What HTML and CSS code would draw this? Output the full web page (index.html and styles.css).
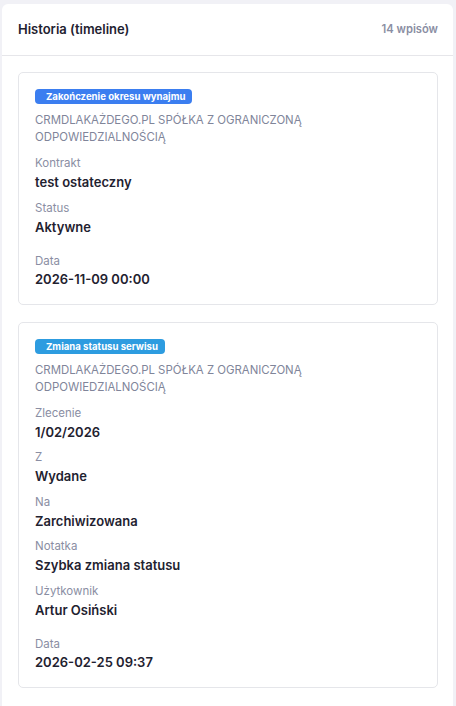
FILE: index.html
```html
<!DOCTYPE html>
<html lang="pl">
<head>
<meta charset="utf-8">
<title>Historia (timeline)</title>
<link rel="stylesheet" href="styles.css">
</head>
<body>
<section class="panel">
  <header class="panel-head">
    <h2 class="panel-title">Historia (timeline)</h2>
    <span class="panel-count">14 wpisów</span>
  </header>
  <div class="panel-body">
    <article class="entry">
      <span class="badge badge-blue">Zakończenie okresu wynajmu</span>
      <p class="company">CRMDLAKAŻDEGO.PL SPÓŁKA Z OGRANICZONĄ ODPOWIEDZIALNOŚCIĄ</p>
      <div class="field"><div class="label">Kontrakt</div><div class="value">test ostateczny</div></div>
      <div class="field"><div class="label">Status</div><div class="value">Aktywne</div></div>
      <div class="field field-date"><div class="label">Data</div><div class="value">2026-11-09 00:00</div></div>
    </article>
    <article class="entry">
      <span class="badge badge-sky">Zmiana statusu serwisu</span>
      <p class="company">CRMDLAKAŻDEGO.PL SPÓŁKA Z OGRANICZONĄ ODPOWIEDZIALNOŚCIĄ</p>
      <div class="field"><div class="label">Zlecenie</div><div class="value">1/02/2026</div></div>
      <div class="field"><div class="label">Z</div><div class="value">Wydane</div></div>
      <div class="field"><div class="label">Na</div><div class="value">Zarchiwizowana</div></div>
      <div class="field"><div class="label">Notatka</div><div class="value">Szybka zmiana statusu</div></div>
      <div class="field"><div class="label">Użytkownik</div><div class="value">Artur Osiński</div></div>
      <div class="field field-date"><div class="label">Data</div><div class="value">2026-02-25 09:37</div></div>
    </article>
  </div>
</section>
</body>
</html>
```
FILE: styles.css
```css
* { box-sizing: border-box; }
html, body { margin: 0; padding: 0; }
body {
  background: #f1f1f6;
  font-family: Inter, "Noto Sans", sans-serif;
  color: #1f2230;
}
.panel {
  margin: 4px 3px 0 2px;
  background: #fff;
  border-radius: 6px 6px 0 0;
  min-height: 720px;
}
.panel-head {
  display: flex;
  align-items: center;
  justify-content: space-between;
  height: 52px;
  padding: 0 15px 2px 16px;
  border-bottom: 1px solid #e6e6ea;
}
.panel-title {
  margin: 0;
  font-size: 13px;
  font-weight: 600;
  color: #1f2230;
}
.panel-count {
  font-size: 11.2px;
  font-weight: 600;
  color: #8a8ea3;
}
.panel-body {
  padding: 16px 15px 16px 16px;
  display: flex;
  flex-direction: column;
  gap: 17px;
}
.entry {
  display: flex;
  flex-direction: column;
  align-items: flex-start;
  border: 1px solid #e5e6ea;
  border-radius: 5px;
  padding: 16px;
}
.badge {
  display: block;
  height: 15px;
  line-height: 15px;
  padding: 0 7px 0 11px;
  border-radius: 4px;
  font-size: 9.6px;
  font-weight: 700;
  color: #fff;
}
.badge-blue { background: #3b7ef0; }
.badge-sky { background: #2d9ce0; }
.company {
  margin: 8px 0 0;
  font-size: 11.4px;
  line-height: 17px;
  color: #80859a;
  text-transform: uppercase;
}
.field { margin-top: 9px; }
.field + .field { margin-top: 8.6px; }
.field.field-date { margin-top: 17px; }
.label {
  font-size: 11.5px;
  line-height: 16px;
  color: #8a8ea3;
}
.value {
  margin-top: 2px;
  font-size: 13px;
  line-height: 18px;
  font-weight: 600;
  color: #1f2230;
}
.field-date .value { margin-top: 1px; }
```
